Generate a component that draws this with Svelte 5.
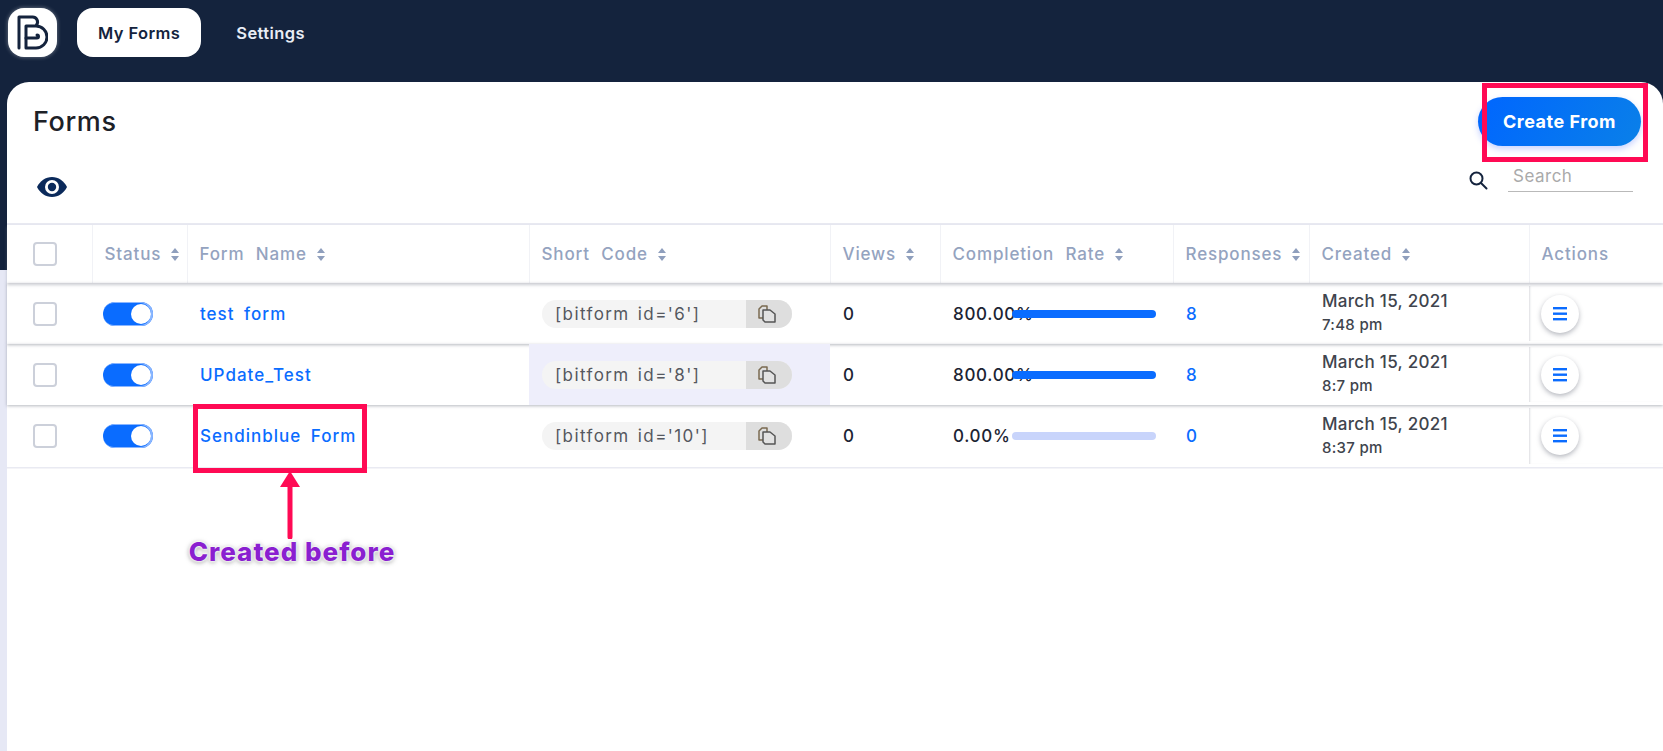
<script>
  const forms = [
    { name: 'test form', id: 6, rate: '800.00%', fill: 100, responses: 8, time: '7:48 pm' },
    { name: 'UPdate_Test', id: 8, rate: '800.00%', fill: 100, responses: 8, time: '8:7 pm', hot: true },
    { name: 'Sendinblue Form', id: 10, rate: '0.00%', fill: 0, responses: 0, time: '8:37 pm' }
  ];

  const columns = [
    { label: 'Status', sort: true },
    { label: 'Form Name', sort: true },
    { label: 'Short Code', sort: true },
    { label: 'Views', sort: true },
    { label: 'Completion Rate', sort: true },
    { label: 'Responses', sort: true },
    { label: 'Created', sort: true },
    { label: 'Actions', sort: false }
  ];
</script>

<div class="page">
  <nav class="topbar">
    <div class="logo">
      <svg width="31" height="35" viewBox="0 0 31 35" fill="none" stroke="#14233d" stroke-width="3" stroke-linecap="round" stroke-linejoin="round">
        <path d="M2 33V2h13a5 5 0 0 1 4.500 8" />
        <path d="M9 33V11h10a11 11 0 0 1 0 22z" />
        <path d="M9 23h11a1.500 1.500 0 0 0 0-3" />
      </svg>
    </div>
    <a class="tab active" href="#forms">My Forms</a>
    <a class="tab" href="#settings">Settings</a>
  </nav>

  <main class="card">
    <header class="head">
      <h1>Forms</h1>
      <button class="create">Create From</button>
    </header>

    <div class="tools">
      <svg class="eye" width="30" height="20" viewBox="0 0 30 20">
        <path fill="#0b2a5b" d="M15 0C8.500 0 3 4 0 10c3 6 8.500 10 15 10s12-4 15-10C27 4 21.500 0 15 0z" />
        <circle cx="15" cy="10" r="7" fill="#fff" />
        <circle cx="15" cy="10" r="4.200" fill="#0b2a5b" />
      </svg>
      <div class="search">
        <svg width="20" height="20" viewBox="0 0 20 20" fill="none" stroke="#14233d" stroke-width="2">
          <circle cx="8.500" cy="8.500" r="6" />
          <path d="M13 13l5.500 5.500" stroke-linecap="round" />
        </svg>
        <input placeholder="Search" />
      </div>
    </div>

    <div class="table">
      <div class="row th">
        <div class="cell"><span class="check"></span></div>
        {#each columns as col}
          <div class="cell">
            {col.label}
            {#if col.sort}
              <svg class="sort" width="8" height="13" viewBox="0 0 8 13" fill="#8f9fbd">
                <path d="M4 0l4 5H0zM4 13L0 8h8z" />
              </svg>
            {/if}
          </div>
        {/each}
      </div>

      {#each forms as form, i}
        <div class="row tr" class:last={i === 2}>
          <div class="cell"><span class="check"></span></div>
          <div class="cell"><span class="toggle"><span class="knob"></span></span></div>
          <div class="cell link">{form.name}</div>
          <div class="cell" class:hot={form.hot}>
            <div class="code">
              <span class="code-text">[bitform id='{form.id}']</span>
              <span class="copy">
                <svg width="20" height="20" viewBox="0 0 20 20" fill="none" stroke-width="1.500" stroke-linejoin="round">
                  <path stroke="#7a6a50" d="M7 14H2V5l3-3h5v4" />
                  <path stroke="#555" d="M6 6h7l5 4v8H8l-2-2z" fill="#e2e2e2" />
                </svg>
              </span>
            </div>
          </div>
          <div class="cell">0</div>
          <div class="cell rate">
            <span class="rate-text">{form.rate}</span>
            <span class="bar"><span class="bar-fill" style="width: {form.fill}%"></span></span>
          </div>
          <div class="cell link num">{form.responses}</div>
          <div class="cell date">
            <span>March 15, 2021</span>
            <small>{form.time}</small>
          </div>
          <div class="cell actions">
            <button class="menu" aria-label="Actions">
              <svg width="14" height="14" viewBox="0 0 14 14" fill="#0a6cff">
                <rect y="0" width="14" height="2.400" />
                <rect y="5.500" width="14" height="2.400" />
                <rect y="11" width="14" height="2.400" />
              </svg>
            </button>
          </div>
        </div>
      {/each}
    </div>

    <div class="mark mark-create"></div>
    <div class="mark mark-name"></div>
    <svg class="arrow" width="24" height="68" viewBox="0 0 24 68">
      <path d="M12 14v52" stroke="#ff0a54" stroke-width="5" stroke-linecap="round" />
      <path d="M12 0l10 16H2z" fill="#ff0a54" />
    </svg>
    <div class="note">Created before</div>
  </main>
</div>

<style>
  :global(body) {
    margin: 0;
    overflow: hidden;
  }

  .page {
    height: 751px;
    padding-left: 7px;
    background: linear-gradient(#14233d 270px, #e6e8f5 270px);
    font-family: Inter, "Noto Sans", sans-serif;
    font-size: 17px;
    font-weight: 500;
    color: #1c2433;
    display: flex;
    flex-direction: column;
  }

  .topbar {
    height: 82px;
    margin-left: -7px;
    padding: 8px 0 0 8px;
    box-sizing: border-box;
    display: flex;
    align-items: flex-start;
    flex-shrink: 0;
  }

  .logo {
    width: 49px;
    height: 49px;
    border-radius: 16px;
    background: #fff;
    display: flex;
    align-items: center;
    justify-content: center;
    box-shadow: 0 0 4px rgba(255, 255, 255, 0.4);
  }

  .tab {
    height: 49px;
    display: flex;
    align-items: center;
    padding: 0 21px;
    margin-left: 20px;
    border-radius: 16px;
    color: #e9edf5;
    font-weight: 600;
    font-size: 16.500px;
    letter-spacing: 0.4px;
    text-decoration: none;
  }

  .tab + .tab {
    margin-left: 14px;
  }

  .tab.active {
    background: #fff;
    color: #14233d;
  }

  .card {
    position: relative;
    flex: 1;
    background: #fff;
    border-radius: 22px 22px 0 0;
  }

  .head {
    display: flex;
    justify-content: space-between;
    align-items: center;
    padding: 15px 22px 0 26px;
  }

  h1 {
    margin: 0;
    font-size: 27px;
    font-weight: 500;
    letter-spacing: 0.6px;
    color: #1d2127;
  }

  .create {
    width: 163px;
    height: 49px;
    border: 0;
    border-radius: 25px;
    background: linear-gradient(120deg, #0066ff, #0a80e8);
    box-shadow: 0 3px 6px rgba(40, 80, 255, 0.25);
    color: #fff;
    font: 700 18px Inter, sans-serif;
    letter-spacing: 0.5px;
  }

  .tools {
    height: 77px;
    padding: 0 30px 0 30px;
    display: flex;
    justify-content: space-between;
    align-items: center;
  }

  .eye {
    margin-top: 4px;
  }

  .search {
    display: flex;
    align-items: center;
    gap: 20px;
    margin-top: -9px;
  }

  .search input {
    width: 115px;
    height: 30px;
    margin-bottom: 8px;
    padding: 0 5px;
    box-sizing: content-box;
    border: 0;
    border-bottom: 1.500px solid #b9b9b9;
    font: 400 17px Inter, sans-serif;
    letter-spacing: 0.5px;
    outline: 0;
  }

  .search input::placeholder {
    color: #aaa;
    opacity: 1;
  }

  .table {
    border-top: 2px solid #e9eaf2;
  }

  .row {
    display: grid;
    grid-template-columns: 85px 95px 342px 301px 110px 233px 136px 220px 1fr;
    height: 61px;
    box-sizing: border-box;
  }

  .th {
    height: 58px;
    color: #94a3bf;
    letter-spacing: 0.85px;
    word-spacing: 6px;
    box-shadow: 0 2px 3px rgba(120, 125, 140, 0.4);
    position: relative;
  }

  .tr {
    position: relative;
    box-shadow: 0 1px 3px rgba(110, 115, 130, 0.5);
    letter-spacing: 0.7px;
  }

  .tr.last {
    height: 62px;
    box-shadow: 0 1.500px 0 #e9eaf2;
  }

  .cell {
    display: flex;
    align-items: center;
    padding-left: 13px;
    min-width: 0;
    white-space: nowrap;
  }

  .cell:first-child {
    padding-left: 26px;
  }

  .th .cell + .cell {
    border-left: 1.500px solid #f1f2f6;
    padding-left: 11.500px;
  }

  .sort {
    margin-left: 10px;
  }

  .check {
    width: 24px;
    height: 24px;
    box-sizing: border-box;
    border: 2px solid #ccd0da;
    border-radius: 4px;
  }

  .toggle {
    width: 50px;
    height: 24px;
    margin-left: -2px;
    border-radius: 12px;
    background: #0a6cff;
    display: flex;
    align-items: center;
    justify-content: flex-end;
    padding-right: 2px;
    box-sizing: border-box;
    box-shadow: inset -1px 0 0 1px #8ab6ff;
  }

  .knob {
    width: 20px;
    height: 20px;
    border-radius: 50%;
    background: #fff;
  }

  .link {
    color: #0a6cff;
    letter-spacing: 1px;
    word-spacing: 4px;
  }

  .hot {
    background: #eeeefb;
  }

  .code {
    width: 250px;
    height: 28px;
    border-radius: 14px;
    background: #f4f4f4;
    display: flex;
    overflow: hidden;
    color: #55585f;
    font-weight: 400;
    letter-spacing: 1.400px;
    word-spacing: 2px;
  }

  .code-text {
    flex: 1;
    padding-left: 13px;
    line-height: 28px;
  }

  .copy {
    width: 46px;
    background: #dedede;
    display: flex;
    align-items: center;
    justify-content: center;
    padding-right: 4px;
    box-sizing: border-box;
  }

  .rate-text {
    width: 59px;
    flex-shrink: 0;
  }

  .bar {
    width: 144px;
    height: 8px;
    border-radius: 4px;
    background: #c8d4fb;
    position: relative;
    overflow: hidden;
  }

  .bar-fill {
    display: block;
    height: 100%;
    background: #0a6cff;
  }

  .date {
    flex-direction: column;
    align-items: flex-start;
    justify-content: center;
    gap: 6px;
    color: #40444d;
    line-height: 18px;
    margin-top: -1px;
    letter-spacing: 0.3px;
  }

  .date small {
    font-size: 15px;
  }

  .actions {
    padding-left: 12px;
    box-shadow: inset 2px 0 2px -1px rgba(120, 125, 140, 0.25);
    margin: 3px 0;
  }

  .menu {
    width: 38px;
    height: 38px;
    border: 0;
    padding: 0;
    border-radius: 50%;
    background: #fff;
    box-shadow: 0 2px 5px rgba(90, 95, 110, 0.45);
    display: flex;
    align-items: center;
    justify-content: center;
  }

  /* annotations drawn on top of the screenshot */
  .mark {
    position: absolute;
    box-sizing: border-box;
    border: 5px solid #ff0a54;
  }

  .mark-create {
    left: 1475px;
    top: 1px;
    width: 166px;
    height: 79px;
  }

  .mark-name {
    left: 186px;
    top: 322px;
    width: 174px;
    height: 69px;
  }

  .arrow {
    position: absolute;
    left: 271px;
    top: 389px;
  }

  .note {
    position: absolute;
    left: 178px;
    top: 454px;
    width: 214px;
    text-align: center;
    color: #8a1fd0;
    font-weight: 800;
    font-size: 26px;
    letter-spacing: 1px;
    line-height: 32px;
    white-space: nowrap;
    text-shadow: 0 0 2px #fff, 0 0 3px #fff, 0 0 3px #fff, 0 1px 5px #777;
  }
</style>
